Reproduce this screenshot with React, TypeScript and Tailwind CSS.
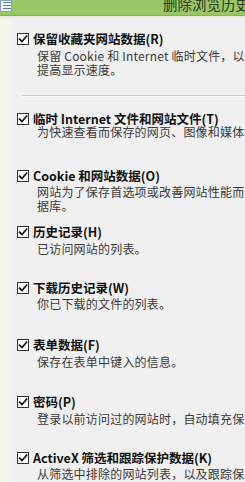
import React from "react";

const FONT = { fontFamily: '"Noto Sans CJK SC", "Noto Sans", sans-serif' };

function Check() {
  return (
    <div className="w-[12px] h-[12px] shrink-0 border border-[#333333] bg-white flex items-center justify-center">
      <svg width="10" height="10" viewBox="0 0 10 10">
        <path d="M1.6 5.2 L4 7.6 L8.6 2.2" fill="none" stroke="#111" strokeWidth="1.7" strokeLinecap="square" />
      </svg>
    </div>
  );
}

function Label({ text, className }: { text: string; className: string }) {
  return (
    <div className={"flex items-center gap-[4px] h-[14px] " + className}>
      <Check />
      <span className="text-[12.5px] leading-[14px] font-bold text-[#111] whitespace-nowrap">{text}</span>
    </div>
  );
}

function Desc({ lines, className }: { lines: string[]; className: string }) {
  return (
    <div className={"pl-[20px] text-[12px] leading-[14px] text-[#3a3a3a] whitespace-nowrap overflow-hidden tracking-[0.2px] " + className}>
      {lines.map((l, i) => (
        <div key={i}>{l}</div>
      ))}
    </div>
  );
}

export default function App() {
  return (
    <div className="w-[245px] h-[482px] overflow-hidden bg-[#f0f0f0] flex flex-col" style={FONT}>
      <div className="h-[16px] shrink-0 bg-[#99c766] border-b border-[#84b454] flex overflow-hidden">
        <div className="w-[14px] h-[12px] bg-[#f4f7fb] border border-[#8aa0b8] flex flex-col gap-[2px] pt-[1px] pl-[2px]">
          <div className="w-[8px] h-[1px] bg-[#5a7fa8]" />
          <div className="w-[8px] h-[1px] bg-[#5a7fa8]" />
          <div className="w-[8px] h-[1px] bg-[#5a7fa8]" />
        </div>
        <div className="pl-[151px] mt-[-5px] text-[14.5px] leading-[18px] text-[#2c3a22] whitespace-nowrap">删除浏览历史记录</div>
      </div>
      <div className="h-[2px] shrink-0 bg-[#e7ecdc]" />
      <div className="flex flex-1">
        <div className="w-[12px] shrink-0 bg-[#f4f5ec]" />
        <div className="flex-1 min-w-0 pl-[5px] flex flex-col">
          <Label text="保留收藏夹网站数据(R)" className="mt-[14px]" />
          <Desc className="mt-[3px]" lines={["保留 Cookie 和 Internet 临时文件，以便你收藏的网站能够保留首选项并", "提高显示速度。"]} />
          <div className="mt-[18px] ml-[5px] h-[1px] bg-[#cdcdcd]" />
          <div className="ml-[5px] h-[1px] bg-[#fbfbfb]" />
          <Label text="临时 Internet 文件和网站文件(T)" className="mt-[15px]" />
          <Desc className="mt-[-1px]" lines={["为快速查看而保存的网页、图像和媒体的副本。"]} />
          <Label text="Cookie 和网站数据(O)" className="mt-[30px]" />
          <Desc className="mt-[2px]" lines={["网站为了保存首选项或改善网站性能而存储在计算机上的文件或数", "据库。"]} />
          <Label text="历史记录(H)" className="mt-[12px]" />
          <Desc className="mt-[3px]" lines={["已访问网站的列表。"]} />
          <Label text="下载历史记录(W)" className="mt-[25px]" />
          <Desc className="mt-[2px]" lines={["你已下载的文件的列表。"]} />
          <Label text="表单数据(F)" className="mt-[27px]" />
          <Desc className="mt-[3px]" lines={["保存在表单中键入的信息。"]} />
          <Label text="密码(P)" className="mt-[26px]" />
          <Desc className="mt-[3px]" lines={["登录以前访问过的网站时，自动填充保存的密码。"]} />
          <Label text="ActiveX 筛选和跟踪保护数据(K)" className="mt-[25px]" />
          <Desc className="mt-[2px]" lines={["从筛选中排除的网站列表，以及跟踪保护用来检测哪些网站可能会自动共享你的访问详细信息的数据。"]} />
        </div>
      </div>
    </div>
  );
}
